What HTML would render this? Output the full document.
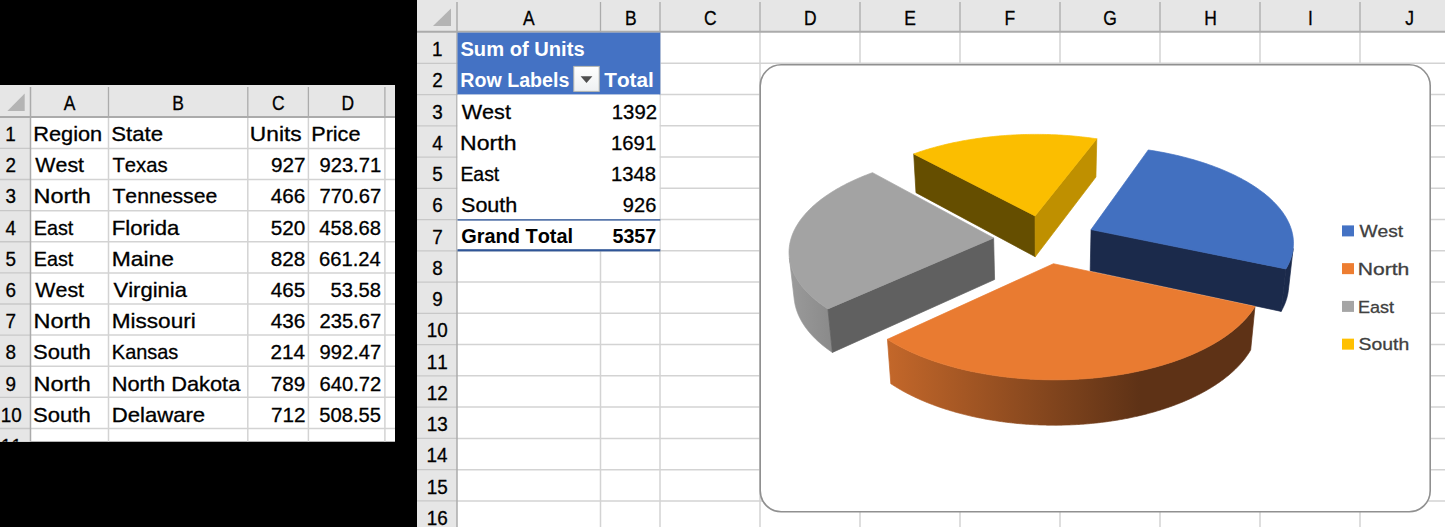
<!DOCTYPE html>
<html><head><meta charset="utf-8"><style>
html,body{margin:0;padding:0;background:#000;overflow:hidden}
svg{display:block}
text{font-family:"Liberation Sans",sans-serif;font-kerning:none}
</style></head><body>
<svg width="1445" height="527" viewBox="0 0 1445 527">
<rect x="0" y="0" width="1445" height="527" fill="#000"/>
<rect x="0" y="85" width="395" height="356.7" fill="#fff"/>
<rect x="0" y="85" width="395" height="32.28" fill="#E6E6E6"/>
<rect x="0" y="117.28" width="30.5" height="324.41999999999996" fill="#E6E6E6"/>
<clipPath id="cl"><rect x="0" y="85" width="395" height="356.7"/></clipPath><g clip-path="url(#cl)">
<line x1="30.5" y1="148.4" x2="395" y2="148.4" stroke="#D3D3D3" stroke-width="1.5"/>
<line x1="0" y1="148.4" x2="30.5" y2="148.4" stroke="#C8C8C8" stroke-width="1.3"/>
<line x1="30.5" y1="179.52" x2="395" y2="179.52" stroke="#D3D3D3" stroke-width="1.5"/>
<line x1="0" y1="179.52" x2="30.5" y2="179.52" stroke="#C8C8C8" stroke-width="1.3"/>
<line x1="30.5" y1="210.64" x2="395" y2="210.64" stroke="#D3D3D3" stroke-width="1.5"/>
<line x1="0" y1="210.64" x2="30.5" y2="210.64" stroke="#C8C8C8" stroke-width="1.3"/>
<line x1="30.5" y1="241.76" x2="395" y2="241.76" stroke="#D3D3D3" stroke-width="1.5"/>
<line x1="0" y1="241.76" x2="30.5" y2="241.76" stroke="#C8C8C8" stroke-width="1.3"/>
<line x1="30.5" y1="272.88" x2="395" y2="272.88" stroke="#D3D3D3" stroke-width="1.5"/>
<line x1="0" y1="272.88" x2="30.5" y2="272.88" stroke="#C8C8C8" stroke-width="1.3"/>
<line x1="30.5" y1="304.0" x2="395" y2="304.0" stroke="#D3D3D3" stroke-width="1.5"/>
<line x1="0" y1="304.0" x2="30.5" y2="304.0" stroke="#C8C8C8" stroke-width="1.3"/>
<line x1="30.5" y1="335.12" x2="395" y2="335.12" stroke="#D3D3D3" stroke-width="1.5"/>
<line x1="0" y1="335.12" x2="30.5" y2="335.12" stroke="#C8C8C8" stroke-width="1.3"/>
<line x1="30.5" y1="366.24" x2="395" y2="366.24" stroke="#D3D3D3" stroke-width="1.5"/>
<line x1="0" y1="366.24" x2="30.5" y2="366.24" stroke="#C8C8C8" stroke-width="1.3"/>
<line x1="30.5" y1="397.36" x2="395" y2="397.36" stroke="#D3D3D3" stroke-width="1.5"/>
<line x1="0" y1="397.36" x2="30.5" y2="397.36" stroke="#C8C8C8" stroke-width="1.3"/>
<line x1="30.5" y1="428.48" x2="395" y2="428.48" stroke="#D3D3D3" stroke-width="1.5"/>
<line x1="0" y1="428.48" x2="30.5" y2="428.48" stroke="#C8C8C8" stroke-width="1.3"/>
<line x1="30.5" y1="459.6" x2="395" y2="459.6" stroke="#D3D3D3" stroke-width="1.5"/>
<line x1="0" y1="459.6" x2="30.5" y2="459.6" stroke="#C8C8C8" stroke-width="1.3"/>
<line x1="108.5" y1="117.28" x2="108.5" y2="441.7" stroke="#D3D3D3" stroke-width="1.5"/>
<line x1="108.5" y1="87" x2="108.5" y2="117.28" stroke="#ABABAB" stroke-width="1.3"/>
<line x1="247.8" y1="117.28" x2="247.8" y2="441.7" stroke="#D3D3D3" stroke-width="1.5"/>
<line x1="247.8" y1="87" x2="247.8" y2="117.28" stroke="#ABABAB" stroke-width="1.3"/>
<line x1="308.4" y1="117.28" x2="308.4" y2="441.7" stroke="#D3D3D3" stroke-width="1.5"/>
<line x1="308.4" y1="87" x2="308.4" y2="117.28" stroke="#ABABAB" stroke-width="1.3"/>
<line x1="384.9" y1="117.28" x2="384.9" y2="441.7" stroke="#D3D3D3" stroke-width="1.5"/>
<line x1="384.9" y1="87" x2="384.9" y2="117.28" stroke="#ABABAB" stroke-width="1.3"/>
<line x1="30.5" y1="87" x2="30.5" y2="441.7" stroke="#ABABAB" stroke-width="1.5"/>
<line x1="0" y1="116.9" x2="395" y2="116.9" stroke="#ABABAB" stroke-width="2"/>
<polygon points="7.4,111 24.7,111 24.7,93.6" fill="#B4B4B4"/>
<text x="63.68" y="110.10" textLength="11.64" lengthAdjust="spacingAndGlyphs" font-size="20.3" fill="#000" stroke="#000" stroke-width="0.3">A</text>
<text x="172.32" y="110.10" textLength="11.64" lengthAdjust="spacingAndGlyphs" font-size="20.3" fill="#000" stroke="#000" stroke-width="0.3">B</text>
<text x="271.99" y="110.10" textLength="12.61" lengthAdjust="spacingAndGlyphs" font-size="20.3" fill="#000" stroke="#000" stroke-width="0.3">C</text>
<text x="341.40" y="110.10" textLength="12.61" lengthAdjust="spacingAndGlyphs" font-size="20.3" fill="#000" stroke="#000" stroke-width="0.3">D</text>
<text x="5.19" y="140.90" textLength="10.50" lengthAdjust="spacingAndGlyphs" font-size="20.3" fill="#000" stroke="#000" stroke-width="0.3">1</text>
<text x="5.45" y="172.10" textLength="10.50" lengthAdjust="spacingAndGlyphs" font-size="20.3" fill="#000" stroke="#000" stroke-width="0.3">2</text>
<text x="5.51" y="203.30" textLength="10.50" lengthAdjust="spacingAndGlyphs" font-size="20.3" fill="#000" stroke="#000" stroke-width="0.3">3</text>
<text x="5.51" y="234.50" textLength="10.50" lengthAdjust="spacingAndGlyphs" font-size="20.3" fill="#000" stroke="#000" stroke-width="0.3">4</text>
<text x="5.47" y="265.70" textLength="10.50" lengthAdjust="spacingAndGlyphs" font-size="20.3" fill="#000" stroke="#000" stroke-width="0.3">5</text>
<text x="5.39" y="296.90" textLength="10.50" lengthAdjust="spacingAndGlyphs" font-size="20.3" fill="#000" stroke="#000" stroke-width="0.3">6</text>
<text x="5.44" y="328.10" textLength="10.50" lengthAdjust="spacingAndGlyphs" font-size="20.3" fill="#000" stroke="#000" stroke-width="0.3">7</text>
<text x="5.45" y="359.30" textLength="10.50" lengthAdjust="spacingAndGlyphs" font-size="20.3" fill="#000" stroke="#000" stroke-width="0.3">8</text>
<text x="5.45" y="390.50" textLength="10.50" lengthAdjust="spacingAndGlyphs" font-size="20.3" fill="#000" stroke="#000" stroke-width="0.3">9</text>
<text x="0.65" y="421.70" textLength="21.00" lengthAdjust="spacingAndGlyphs" font-size="20.3" fill="#000" stroke="#000" stroke-width="0.3">10</text>
<text x="0.74" y="452.90" textLength="21.00" lengthAdjust="spacingAndGlyphs" font-size="20.3" fill="#000" stroke="#000" stroke-width="0.3">11</text>
</g>
<text x="33.21" y="140.90" textLength="69.00" lengthAdjust="spacingAndGlyphs" font-size="20.3" fill="#000" stroke="#000" stroke-width="0.3">Region</text>
<text x="111.29" y="140.90" textLength="51.79" lengthAdjust="spacingAndGlyphs" font-size="20.3" fill="#000" stroke="#000" stroke-width="0.3">State</text>
<text x="35.31" y="172.10" textLength="48.75" lengthAdjust="spacingAndGlyphs" font-size="20.3" fill="#000" stroke="#000" stroke-width="0.3">West</text>
<text x="112.44" y="172.10" textLength="55.19" lengthAdjust="spacingAndGlyphs" font-size="20.3" fill="#000" stroke="#000" stroke-width="0.3">Texas</text>
<text x="33.48" y="203.30" textLength="57.35" lengthAdjust="spacingAndGlyphs" font-size="20.3" fill="#000" stroke="#000" stroke-width="0.3">North</text>
<text x="112.42" y="203.30" textLength="104.82" lengthAdjust="spacingAndGlyphs" font-size="20.3" fill="#000" stroke="#000" stroke-width="0.3">Tennessee</text>
<text x="33.78" y="234.50" textLength="39.57" lengthAdjust="spacingAndGlyphs" font-size="20.3" fill="#000" stroke="#000" stroke-width="0.3">East</text>
<text x="111.79" y="234.50" textLength="67.61" lengthAdjust="spacingAndGlyphs" font-size="20.3" fill="#000" stroke="#000" stroke-width="0.3">Florida</text>
<text x="33.78" y="265.70" textLength="39.57" lengthAdjust="spacingAndGlyphs" font-size="20.3" fill="#000" stroke="#000" stroke-width="0.3">East</text>
<text x="111.72" y="265.70" textLength="62.29" lengthAdjust="spacingAndGlyphs" font-size="20.3" fill="#000" stroke="#000" stroke-width="0.3">Maine</text>
<text x="35.31" y="296.90" textLength="48.75" lengthAdjust="spacingAndGlyphs" font-size="20.3" fill="#000" stroke="#000" stroke-width="0.3">West</text>
<text x="113.50" y="296.90" textLength="73.40" lengthAdjust="spacingAndGlyphs" font-size="20.3" fill="#000" stroke="#000" stroke-width="0.3">Virginia</text>
<text x="33.48" y="328.10" textLength="57.35" lengthAdjust="spacingAndGlyphs" font-size="20.3" fill="#000" stroke="#000" stroke-width="0.3">North</text>
<text x="111.65" y="328.10" textLength="84.18" lengthAdjust="spacingAndGlyphs" font-size="20.3" fill="#000" stroke="#000" stroke-width="0.3">Missouri</text>
<text x="33.10" y="359.30" textLength="57.63" lengthAdjust="spacingAndGlyphs" font-size="20.3" fill="#000" stroke="#000" stroke-width="0.3">South</text>
<text x="111.87" y="359.30" textLength="66.45" lengthAdjust="spacingAndGlyphs" font-size="20.3" fill="#000" stroke="#000" stroke-width="0.3">Kansas</text>
<text x="33.48" y="390.50" textLength="57.35" lengthAdjust="spacingAndGlyphs" font-size="20.3" fill="#000" stroke="#000" stroke-width="0.3">North</text>
<text x="111.71" y="390.50" textLength="128.59" lengthAdjust="spacingAndGlyphs" font-size="20.3" fill="#000" stroke="#000" stroke-width="0.3">North Dakota</text>
<text x="33.10" y="421.70" textLength="57.63" lengthAdjust="spacingAndGlyphs" font-size="20.3" fill="#000" stroke="#000" stroke-width="0.3">South</text>
<text x="111.68" y="421.70" textLength="93.50" lengthAdjust="spacingAndGlyphs" font-size="20.3" fill="#000" stroke="#000" stroke-width="0.3">Delaware</text>
<text x="249.85" y="141.00" textLength="51.77" lengthAdjust="spacingAndGlyphs" font-size="20.3" fill="#000" stroke="#000" stroke-width="0.3">Units</text>
<text x="311.23" y="141.00" textLength="49.23" lengthAdjust="spacingAndGlyphs" font-size="20.3" fill="#000" stroke="#000" stroke-width="0.3">Price</text>
<text x="270.93" y="172.10" textLength="34.51" lengthAdjust="spacingAndGlyphs" font-size="20.3" fill="#000" stroke="#000" stroke-width="0.3">927</text>
<text x="319.45" y="172.10" textLength="61.73" lengthAdjust="spacingAndGlyphs" font-size="20.3" fill="#000" stroke="#000" stroke-width="0.3">923.71</text>
<text x="270.80" y="203.30" textLength="34.51" lengthAdjust="spacingAndGlyphs" font-size="20.3" fill="#000" stroke="#000" stroke-width="0.3">466</text>
<text x="319.48" y="203.30" textLength="61.73" lengthAdjust="spacingAndGlyphs" font-size="20.3" fill="#000" stroke="#000" stroke-width="0.3">770.67</text>
<text x="270.70" y="234.50" textLength="34.51" lengthAdjust="spacingAndGlyphs" font-size="20.3" fill="#000" stroke="#000" stroke-width="0.3">520</text>
<text x="319.35" y="234.50" textLength="61.73" lengthAdjust="spacingAndGlyphs" font-size="20.3" fill="#000" stroke="#000" stroke-width="0.3">458.68</text>
<text x="270.79" y="265.70" textLength="34.51" lengthAdjust="spacingAndGlyphs" font-size="20.3" fill="#000" stroke="#000" stroke-width="0.3">828</text>
<text x="319.06" y="265.70" textLength="61.73" lengthAdjust="spacingAndGlyphs" font-size="20.3" fill="#000" stroke="#000" stroke-width="0.3">661.24</text>
<text x="270.76" y="296.90" textLength="34.51" lengthAdjust="spacingAndGlyphs" font-size="20.3" fill="#000" stroke="#000" stroke-width="0.3">465</text>
<text x="330.57" y="296.90" textLength="50.51" lengthAdjust="spacingAndGlyphs" font-size="20.3" fill="#000" stroke="#000" stroke-width="0.3">53.58</text>
<text x="270.80" y="328.10" textLength="34.51" lengthAdjust="spacingAndGlyphs" font-size="20.3" fill="#000" stroke="#000" stroke-width="0.3">436</text>
<text x="319.48" y="328.10" textLength="61.73" lengthAdjust="spacingAndGlyphs" font-size="20.3" fill="#000" stroke="#000" stroke-width="0.3">235.67</text>
<text x="270.50" y="359.30" textLength="34.51" lengthAdjust="spacingAndGlyphs" font-size="20.3" fill="#000" stroke="#000" stroke-width="0.3">214</text>
<text x="319.48" y="359.30" textLength="61.73" lengthAdjust="spacingAndGlyphs" font-size="20.3" fill="#000" stroke="#000" stroke-width="0.3">992.47</text>
<text x="270.87" y="390.50" textLength="34.51" lengthAdjust="spacingAndGlyphs" font-size="20.3" fill="#000" stroke="#000" stroke-width="0.3">789</text>
<text x="319.48" y="390.50" textLength="61.73" lengthAdjust="spacingAndGlyphs" font-size="20.3" fill="#000" stroke="#000" stroke-width="0.3">640.72</text>
<text x="270.93" y="421.70" textLength="34.51" lengthAdjust="spacingAndGlyphs" font-size="20.3" fill="#000" stroke="#000" stroke-width="0.3">712</text>
<text x="319.32" y="421.70" textLength="61.73" lengthAdjust="spacingAndGlyphs" font-size="20.3" fill="#000" stroke="#000" stroke-width="0.3">508.55</text>
<rect x="417.0" y="0" width="1028.0" height="527" fill="#fff"/>
<rect x="417.0" y="0" width="1028.0" height="32.04" fill="#E6E6E6"/>
<rect x="417.0" y="32.04" width="40.0" height="494.96" fill="#E6E6E6"/>
<line x1="457" y1="63.297" x2="1445" y2="63.297" stroke="#D3D3D3" stroke-width="1.5"/>
<line x1="417.0" y1="63.297" x2="457" y2="63.297" stroke="#C8C8C8" stroke-width="1.3"/>
<line x1="457" y1="94.554" x2="1445" y2="94.554" stroke="#D3D3D3" stroke-width="1.5"/>
<line x1="417.0" y1="94.554" x2="457" y2="94.554" stroke="#C8C8C8" stroke-width="1.3"/>
<line x1="457" y1="125.811" x2="1445" y2="125.811" stroke="#D3D3D3" stroke-width="1.5"/>
<line x1="417.0" y1="125.811" x2="457" y2="125.811" stroke="#C8C8C8" stroke-width="1.3"/>
<line x1="457" y1="157.068" x2="1445" y2="157.068" stroke="#D3D3D3" stroke-width="1.5"/>
<line x1="417.0" y1="157.068" x2="457" y2="157.068" stroke="#C8C8C8" stroke-width="1.3"/>
<line x1="457" y1="188.325" x2="1445" y2="188.325" stroke="#D3D3D3" stroke-width="1.5"/>
<line x1="417.0" y1="188.325" x2="457" y2="188.325" stroke="#C8C8C8" stroke-width="1.3"/>
<line x1="457" y1="219.582" x2="1445" y2="219.582" stroke="#D3D3D3" stroke-width="1.5"/>
<line x1="417.0" y1="219.582" x2="457" y2="219.582" stroke="#C8C8C8" stroke-width="1.3"/>
<line x1="457" y1="250.839" x2="1445" y2="250.839" stroke="#D3D3D3" stroke-width="1.5"/>
<line x1="417.0" y1="250.839" x2="457" y2="250.839" stroke="#C8C8C8" stroke-width="1.3"/>
<line x1="457" y1="282.096" x2="1445" y2="282.096" stroke="#D3D3D3" stroke-width="1.5"/>
<line x1="417.0" y1="282.096" x2="457" y2="282.096" stroke="#C8C8C8" stroke-width="1.3"/>
<line x1="457" y1="313.353" x2="1445" y2="313.353" stroke="#D3D3D3" stroke-width="1.5"/>
<line x1="417.0" y1="313.353" x2="457" y2="313.353" stroke="#C8C8C8" stroke-width="1.3"/>
<line x1="457" y1="344.61" x2="1445" y2="344.61" stroke="#D3D3D3" stroke-width="1.5"/>
<line x1="417.0" y1="344.61" x2="457" y2="344.61" stroke="#C8C8C8" stroke-width="1.3"/>
<line x1="457" y1="375.867" x2="1445" y2="375.867" stroke="#D3D3D3" stroke-width="1.5"/>
<line x1="417.0" y1="375.867" x2="457" y2="375.867" stroke="#C8C8C8" stroke-width="1.3"/>
<line x1="457" y1="407.124" x2="1445" y2="407.124" stroke="#D3D3D3" stroke-width="1.5"/>
<line x1="417.0" y1="407.124" x2="457" y2="407.124" stroke="#C8C8C8" stroke-width="1.3"/>
<line x1="457" y1="438.38100000000003" x2="1445" y2="438.38100000000003" stroke="#D3D3D3" stroke-width="1.5"/>
<line x1="417.0" y1="438.38100000000003" x2="457" y2="438.38100000000003" stroke="#C8C8C8" stroke-width="1.3"/>
<line x1="457" y1="469.63800000000003" x2="1445" y2="469.63800000000003" stroke="#D3D3D3" stroke-width="1.5"/>
<line x1="417.0" y1="469.63800000000003" x2="457" y2="469.63800000000003" stroke="#C8C8C8" stroke-width="1.3"/>
<line x1="457" y1="500.89500000000004" x2="1445" y2="500.89500000000004" stroke="#D3D3D3" stroke-width="1.5"/>
<line x1="417.0" y1="500.89500000000004" x2="457" y2="500.89500000000004" stroke="#C8C8C8" stroke-width="1.3"/>
<line x1="457" y1="532.152" x2="1445" y2="532.152" stroke="#D3D3D3" stroke-width="1.5"/>
<line x1="417.0" y1="532.152" x2="457" y2="532.152" stroke="#C8C8C8" stroke-width="1.3"/>
<line x1="600.5" y1="31.7" x2="600.5" y2="527" stroke="#D3D3D3" stroke-width="1.5"/>
<line x1="600.5" y1="2" x2="600.5" y2="31.7" stroke="#ABABAB" stroke-width="1.3"/>
<line x1="660" y1="31.7" x2="660" y2="527" stroke="#D3D3D3" stroke-width="1.5"/>
<line x1="660" y1="2" x2="660" y2="31.7" stroke="#ABABAB" stroke-width="1.3"/>
<line x1="760" y1="31.7" x2="760" y2="527" stroke="#D3D3D3" stroke-width="1.5"/>
<line x1="760" y1="2" x2="760" y2="31.7" stroke="#ABABAB" stroke-width="1.3"/>
<line x1="860" y1="31.7" x2="860" y2="527" stroke="#D3D3D3" stroke-width="1.5"/>
<line x1="860" y1="2" x2="860" y2="31.7" stroke="#ABABAB" stroke-width="1.3"/>
<line x1="960" y1="31.7" x2="960" y2="527" stroke="#D3D3D3" stroke-width="1.5"/>
<line x1="960" y1="2" x2="960" y2="31.7" stroke="#ABABAB" stroke-width="1.3"/>
<line x1="1060" y1="31.7" x2="1060" y2="527" stroke="#D3D3D3" stroke-width="1.5"/>
<line x1="1060" y1="2" x2="1060" y2="31.7" stroke="#ABABAB" stroke-width="1.3"/>
<line x1="1160" y1="31.7" x2="1160" y2="527" stroke="#D3D3D3" stroke-width="1.5"/>
<line x1="1160" y1="2" x2="1160" y2="31.7" stroke="#ABABAB" stroke-width="1.3"/>
<line x1="1260" y1="31.7" x2="1260" y2="527" stroke="#D3D3D3" stroke-width="1.5"/>
<line x1="1260" y1="2" x2="1260" y2="31.7" stroke="#ABABAB" stroke-width="1.3"/>
<line x1="1360" y1="31.7" x2="1360" y2="527" stroke="#D3D3D3" stroke-width="1.5"/>
<line x1="1360" y1="2" x2="1360" y2="31.7" stroke="#ABABAB" stroke-width="1.3"/>
<line x1="457" y1="2" x2="457" y2="527" stroke="#ABABAB" stroke-width="1.5"/>
<line x1="417.0" y1="31.7" x2="1445" y2="31.7" stroke="#ABABAB" stroke-width="2"/>
<polygon points="433,26 451,26 451,8.5" fill="#B4B4B4"/>
<text x="522.88" y="24.70" textLength="11.64" lengthAdjust="spacingAndGlyphs" font-size="20.3" fill="#000" stroke="#000" stroke-width="0.3">A</text>
<text x="624.92" y="24.70" textLength="11.64" lengthAdjust="spacingAndGlyphs" font-size="20.3" fill="#000" stroke="#000" stroke-width="0.3">B</text>
<text x="704.09" y="24.70" textLength="12.61" lengthAdjust="spacingAndGlyphs" font-size="20.3" fill="#000" stroke="#000" stroke-width="0.3">C</text>
<text x="803.90" y="24.70" textLength="12.61" lengthAdjust="spacingAndGlyphs" font-size="20.3" fill="#000" stroke="#000" stroke-width="0.3">D</text>
<text x="904.34" y="24.70" textLength="11.64" lengthAdjust="spacingAndGlyphs" font-size="20.3" fill="#000" stroke="#000" stroke-width="0.3">E</text>
<text x="1004.50" y="24.70" textLength="10.66" lengthAdjust="spacingAndGlyphs" font-size="20.3" fill="#000" stroke="#000" stroke-width="0.3">F</text>
<text x="1103.22" y="24.70" textLength="13.58" lengthAdjust="spacingAndGlyphs" font-size="20.3" fill="#000" stroke="#000" stroke-width="0.3">G</text>
<text x="1204.19" y="24.70" textLength="12.61" lengthAdjust="spacingAndGlyphs" font-size="20.3" fill="#000" stroke="#000" stroke-width="0.3">H</text>
<text x="1308.07" y="24.70" textLength="4.85" lengthAdjust="spacingAndGlyphs" font-size="20.3" fill="#000" stroke="#000" stroke-width="0.3">I</text>
<text x="1405.35" y="24.70" textLength="8.73" lengthAdjust="spacingAndGlyphs" font-size="20.3" fill="#000" stroke="#000" stroke-width="0.3">J</text>
<text x="431.99" y="56.05" textLength="10.50" lengthAdjust="spacingAndGlyphs" font-size="20.3" fill="#000" stroke="#000" stroke-width="0.3">1</text>
<text x="432.25" y="87.30" textLength="10.50" lengthAdjust="spacingAndGlyphs" font-size="20.3" fill="#000" stroke="#000" stroke-width="0.3">2</text>
<text x="432.31" y="118.56" textLength="10.50" lengthAdjust="spacingAndGlyphs" font-size="20.3" fill="#000" stroke="#000" stroke-width="0.3">3</text>
<text x="432.31" y="149.82" textLength="10.50" lengthAdjust="spacingAndGlyphs" font-size="20.3" fill="#000" stroke="#000" stroke-width="0.3">4</text>
<text x="432.27" y="181.07" textLength="10.50" lengthAdjust="spacingAndGlyphs" font-size="20.3" fill="#000" stroke="#000" stroke-width="0.3">5</text>
<text x="432.19" y="212.33" textLength="10.50" lengthAdjust="spacingAndGlyphs" font-size="20.3" fill="#000" stroke="#000" stroke-width="0.3">6</text>
<text x="432.24" y="243.59" textLength="10.50" lengthAdjust="spacingAndGlyphs" font-size="20.3" fill="#000" stroke="#000" stroke-width="0.3">7</text>
<text x="432.25" y="274.85" textLength="10.50" lengthAdjust="spacingAndGlyphs" font-size="20.3" fill="#000" stroke="#000" stroke-width="0.3">8</text>
<text x="432.25" y="306.10" textLength="10.50" lengthAdjust="spacingAndGlyphs" font-size="20.3" fill="#000" stroke="#000" stroke-width="0.3">9</text>
<text x="426.65" y="337.36" textLength="21.00" lengthAdjust="spacingAndGlyphs" font-size="20.3" fill="#000" stroke="#000" stroke-width="0.3">10</text>
<text x="426.74" y="368.62" textLength="21.00" lengthAdjust="spacingAndGlyphs" font-size="20.3" fill="#000" stroke="#000" stroke-width="0.3">11</text>
<text x="426.76" y="399.87" textLength="21.00" lengthAdjust="spacingAndGlyphs" font-size="20.3" fill="#000" stroke="#000" stroke-width="0.3">12</text>
<text x="426.70" y="431.13" textLength="21.00" lengthAdjust="spacingAndGlyphs" font-size="20.3" fill="#000" stroke="#000" stroke-width="0.3">13</text>
<text x="426.56" y="462.39" textLength="21.00" lengthAdjust="spacingAndGlyphs" font-size="20.3" fill="#000" stroke="#000" stroke-width="0.3">14</text>
<text x="426.68" y="493.65" textLength="21.00" lengthAdjust="spacingAndGlyphs" font-size="20.3" fill="#000" stroke="#000" stroke-width="0.3">15</text>
<text x="426.70" y="524.90" textLength="21.00" lengthAdjust="spacingAndGlyphs" font-size="20.3" fill="#000" stroke="#000" stroke-width="0.3">16</text>
<rect x="457.5" y="32.6" width="202.79999999999995" height="61.99999999999999" fill="#4472C4"/>
<rect x="457.5" y="94.6" width="202.0" height="155.9" fill="#fff"/>
<text x="460.42" y="55.90" textLength="124.21" lengthAdjust="spacingAndGlyphs" font-size="20.3" font-weight="bold" fill="#fff">Sum of Units</text>
<text x="460.29" y="87.40" textLength="109.12" lengthAdjust="spacingAndGlyphs" font-size="20.3" font-weight="bold" fill="#fff">Row Labels</text>
<text x="604.27" y="87.30" textLength="49.50" lengthAdjust="spacingAndGlyphs" font-size="20.3" font-weight="bold" fill="#fff">Total</text>
<linearGradient id="dd" x1="0" y1="0" x2="0" y2="1"><stop offset="0" stop-color="#ffffff"/><stop offset="1" stop-color="#EEF0F2"/></linearGradient>
<rect x="573.8" y="66.4" width="25.4" height="25" fill="url(#dd)" stroke="#B8B8B0" stroke-width="1"/>
<polygon points="580.6,76.3 592.4,76.3 586.5,82.9" fill="#4F4F4F"/>
<text x="461.70" y="118.56" textLength="49.25" lengthAdjust="spacingAndGlyphs" font-size="20.3" fill="#000" stroke="#000" stroke-width="0.3">West</text>
<text x="611.75" y="118.56" textLength="45.27" lengthAdjust="spacingAndGlyphs" font-size="20.3" fill="#000" stroke="#000" stroke-width="0.3">1392</text>
<text x="460.11" y="149.82" textLength="56.39" lengthAdjust="spacingAndGlyphs" font-size="20.3" fill="#000" stroke="#000" stroke-width="0.3">North</text>
<text x="611.05" y="149.82" textLength="45.14" lengthAdjust="spacingAndGlyphs" font-size="20.3" fill="#000" stroke="#000" stroke-width="0.3">1691</text>
<text x="460.41" y="181.07" textLength="38.83" lengthAdjust="spacingAndGlyphs" font-size="20.3" fill="#000" stroke="#000" stroke-width="0.3">East</text>
<text x="611.06" y="181.07" textLength="45.02" lengthAdjust="spacingAndGlyphs" font-size="20.3" fill="#000" stroke="#000" stroke-width="0.3">1348</text>
<text x="461.02" y="212.33" textLength="56.28" lengthAdjust="spacingAndGlyphs" font-size="20.3" fill="#000" stroke="#000" stroke-width="0.3">South</text>
<text x="622.86" y="212.33" textLength="33.42" lengthAdjust="spacingAndGlyphs" font-size="20.3" fill="#000" stroke="#000" stroke-width="0.3">926</text>
<text x="461.18" y="243.10" textLength="111.93" lengthAdjust="spacingAndGlyphs" font-size="20.3" font-weight="bold" fill="#000">Grand Total</text>
<text x="612.49" y="243.10" textLength="43.77" lengthAdjust="spacingAndGlyphs" font-size="20.3" font-weight="bold" fill="#000">5357</text>
<rect x="457.5" y="219.2" width="202.79999999999995" height="1.4" fill="#2F5597"/>
<rect x="457.5" y="249.2" width="202.79999999999995" height="2.2" fill="#2F5597"/>
<rect x="760.2" y="64.8" width="670" height="447" rx="21" ry="21" fill="#fff" stroke="#909090" stroke-width="1.6"/>
<linearGradient id="og" gradientUnits="userSpaceOnUse" x1="888" y1="0" x2="1140" y2="0"><stop offset="0" stop-color="#C3672A"/><stop offset="1" stop-color="#5E3216"/></linearGradient>
<linearGradient id="gg" gradientUnits="userSpaceOnUse" x1="790" y1="0" x2="832" y2="0"><stop offset="0" stop-color="#9A9A9A"/><stop offset="1" stop-color="#8A8A8A"/></linearGradient>
<polygon points="1035.05,215.92 913.73,153.90 915.97,192.63 1035.23,256.72" fill="#654E00" stroke="#654E00" stroke-width="0.7" stroke-linejoin="round"/>
<polygon points="1035.05,215.92 1096.79,138.81 1095.91,177.02 1035.23,256.72" fill="#BF9000" stroke="#BF9000" stroke-width="0.7" stroke-linejoin="round"/>
<polygon points="1035.05,215.92 913.73,153.90 915.72,153.19 917.72,152.49 919.74,151.81 921.77,151.14 923.82,150.48 925.89,149.84 927.97,149.20 930.06,148.58 932.17,147.97 934.30,147.38 936.44,146.80 938.59,146.23 940.76,145.67 942.93,145.13 945.13,144.60 947.33,144.08 949.54,143.57 951.77,143.08 954.01,142.60 956.26,142.14 958.52,141.69 960.79,141.25 963.07,140.82 965.36,140.41 967.66,140.01 969.97,139.63 972.29,139.26 974.61,138.90 976.95,138.55 979.29,138.22 981.64,137.90 983.99,137.60 986.35,137.31 988.72,137.03 991.10,136.77 993.48,136.52 995.86,136.28 998.26,136.06 1000.65,135.85 1003.05,135.66 1005.46,135.48 1007.87,135.31 1010.28,135.15 1012.69,135.01 1015.11,134.89 1017.53,134.78 1019.96,134.68 1022.38,134.59 1024.81,134.52 1027.24,134.47 1029.67,134.42 1032.10,134.39 1034.53,134.38 1036.96,134.38 1039.39,134.39 1041.81,134.41 1044.24,134.45 1046.67,134.51 1049.10,134.58 1051.52,134.66 1053.94,134.75 1056.36,134.86 1058.78,134.98 1061.19,135.12 1063.60,135.27 1066.00,135.43 1068.41,135.61 1070.80,135.80 1073.19,136.01 1075.58,136.23 1077.96,136.46 1080.34,136.71 1082.71,136.97 1085.07,137.24 1087.43,137.53 1089.78,137.83 1092.12,138.14 1094.46,138.47 1096.79,138.81" fill="#FBBE00" stroke="#FBBE00" stroke-width="0.7" stroke-linejoin="round"/>
<polygon points="1293.13,248.53 1293.08,248.92 1293.03,249.32 1292.98,249.71 1292.92,250.11 1292.85,250.50 1292.79,250.90 1292.72,251.29 1292.65,251.69 1292.57,252.08 1292.49,252.48 1292.41,252.87 1292.32,253.27 1292.23,253.66 1292.13,254.06 1292.03,254.45 1291.93,254.85 1291.83,255.24 1291.72,255.64 1291.61,256.03 1291.49,256.43 1291.37,256.82 1291.25,257.21 1291.12,257.61 1290.99,258.00 1290.86,258.40 1290.72,258.79 1290.58,259.19 1290.44,259.58 1290.29,259.97 1290.14,260.37 1289.98,260.76 1289.82,261.15 1289.66,261.54 1289.49,261.94 1289.32,262.33 1289.15,262.72 1288.97,263.11 1288.79,263.51 1288.61,263.90 1288.42,264.29 1288.23,264.68 1288.04,265.07 1287.84,265.46 1287.63,265.85 1287.43,266.24 1287.22,266.63 1287.01,267.02 1286.79,267.41 1286.57,267.80 1286.34,268.19 1286.12,268.57 1285.89,268.96 1281.13,311.38 1281.36,310.98 1281.59,310.58 1281.81,310.18 1282.03,309.78 1282.24,309.38 1282.45,308.98 1282.66,308.58 1282.87,308.18 1283.07,307.78 1283.26,307.37 1283.46,306.97 1283.65,306.57 1283.83,306.17 1284.02,305.76 1284.19,305.36 1284.37,304.96 1284.54,304.55 1284.71,304.15 1284.88,303.75 1285.04,303.34 1285.20,302.94 1285.35,302.53 1285.50,302.13 1285.65,301.72 1285.79,301.32 1285.93,300.91 1286.07,300.50 1286.20,300.10 1286.33,299.69 1286.46,299.29 1286.58,298.88 1286.70,298.47 1286.82,298.07 1286.93,297.66 1287.04,297.26 1287.14,296.85 1287.24,296.44 1287.34,296.04 1287.44,295.63 1287.53,295.22 1287.62,294.81 1287.70,294.41 1287.78,294.00 1287.86,293.59 1287.93,293.19 1288.00,292.78 1288.07,292.37 1288.13,291.97 1288.19,291.56 1288.25,291.15 1288.30,290.74 1288.35,290.34" fill="#1B2A4B" stroke="#1B2A4B" stroke-width="0.7" stroke-linejoin="round"/>
<polygon points="1091.07,229.60 1285.89,268.96 1281.13,311.38 1090.20,270.83" fill="#1B2A4B" stroke="#1B2A4B" stroke-width="0.7" stroke-linejoin="round"/>
<polygon points="1091.07,229.60 1148.26,149.95 1151.83,150.51 1155.39,151.10 1158.93,151.72 1162.45,152.37 1165.95,153.05 1169.42,153.76 1172.87,154.50 1176.30,155.27 1179.70,156.08 1183.08,156.91 1186.42,157.77 1189.74,158.67 1193.03,159.59 1196.28,160.55 1199.51,161.53 1202.70,162.54 1205.85,163.58 1208.97,164.65 1212.05,165.75 1215.09,166.88 1218.09,168.04 1221.06,169.22 1223.97,170.43 1226.85,171.67 1229.68,172.94 1232.47,174.23 1235.21,175.55 1237.90,176.90 1240.55,178.27 1243.14,179.66 1245.68,181.09 1248.17,182.53 1250.60,184.01 1252.98,185.50 1255.31,187.02 1257.58,188.57 1259.78,190.13 1261.93,191.72 1264.02,193.33 1266.05,194.96 1268.01,196.62 1269.91,198.29 1271.74,199.98 1273.51,201.70 1275.21,203.43 1276.84,205.18 1278.40,206.95 1279.89,208.74 1281.31,210.54 1282.65,212.36 1283.92,214.20 1285.12,216.05 1286.24,217.91 1287.28,219.79 1288.24,221.68 1289.13,223.59 1289.93,225.50 1290.66,227.43 1291.30,229.36 1291.86,231.31 1292.34,233.27 1292.73,235.23 1293.04,237.20 1293.26,239.17 1293.40,241.15 1293.44,243.14 1293.40,245.13 1293.28,247.12 1293.06,249.12 1292.75,251.11 1292.35,253.11 1291.87,255.10 1291.29,257.10 1290.62,259.09 1289.86,261.07 1289.00,263.05 1288.06,265.03 1287.02,267.00 1285.89,268.96" fill="#4270C0" stroke="#4270C0" stroke-width="0.7" stroke-linejoin="round"/>
<polygon points="827.91,308.90 827.40,308.57 826.89,308.24 826.39,307.91 825.89,307.57 825.39,307.24 824.90,306.91 824.40,306.57 823.92,306.23 823.43,305.90 822.95,305.56 822.47,305.22 822.00,304.88 821.53,304.54 821.06,304.20 820.59,303.85 820.13,303.51 819.67,303.17 819.22,302.82 818.77,302.48 818.32,302.13 817.87,301.78 817.43,301.43 816.99,301.09 816.56,300.74 816.13,300.38 815.70,300.03 815.27,299.68 814.85,299.33 814.43,298.97 814.02,298.62 813.61,298.26 813.20,297.91 812.79,297.55 812.39,297.19 811.99,296.84 811.60,296.48 811.21,296.12 810.82,295.76 810.43,295.40 810.05,295.04 809.67,294.67 809.30,294.31 808.93,293.95 808.56,293.58 808.20,293.22 807.84,292.85 807.48,292.49 807.12,292.12 806.77,291.75 806.43,291.39 806.08,291.02 805.74,290.65 805.41,290.28 805.07,289.91 804.74,289.54 804.42,289.17 804.09,288.80 803.77,288.43 803.46,288.05 803.14,287.68 802.83,287.31 802.53,286.93 802.23,286.56 801.93,286.18 801.63,285.81 801.34,285.43 801.05,285.05 800.76,284.68 800.48,284.30 800.20,283.92 799.93,283.54 799.66,283.16 799.39,282.79 799.12,282.41 798.86,282.03 798.61,281.65 798.35,281.26 798.10,280.88 797.85,280.50 797.61,280.12 797.37,279.74 797.13,279.36 796.90,278.97 796.67,278.59 796.44,278.21 796.22,277.82 796.00,277.44 795.78,277.05 795.57,276.67 795.36,276.28 795.15,275.90 794.95,275.51 794.75,275.13 794.56,274.74 794.36,274.35 794.18,273.97 793.99,273.58 793.81,273.19 793.63,272.81 793.46,272.42 793.28,272.03 793.12,271.64 792.95,271.25 792.79,270.87 792.63,270.48 792.48,270.09 792.33,269.70 792.18,269.31 792.03,268.92 791.89,268.53 791.76,268.14 791.62,267.75 791.49,267.36 791.36,266.97 791.24,266.58 791.12,266.19 791.00,265.80 790.89,265.41 790.78,265.02 790.67,264.63 790.57,264.24 790.47,263.85 790.37,263.46 790.28,263.07 790.19,262.68 790.10,262.29 790.02,261.90 789.94,261.51 789.86,261.12 789.79,260.73 789.72,260.33 789.66,259.94 789.59,259.55 789.53,259.16 789.48,258.77 789.42,258.38 789.37,257.99 794.34,300.08 794.39,300.49 794.44,300.89 794.50,301.29 794.56,301.69 794.62,302.10 794.69,302.50 794.76,302.90 794.84,303.30 794.91,303.71 794.99,304.11 795.08,304.51 795.16,304.91 795.26,305.32 795.35,305.72 795.45,306.12 795.55,306.52 795.65,306.92 795.76,307.33 795.87,307.73 795.98,308.13 796.10,308.53 796.22,308.93 796.34,309.33 796.47,309.74 796.60,310.14 796.73,310.54 796.87,310.94 797.01,311.34 797.15,311.74 797.30,312.14 797.45,312.54 797.60,312.94 797.76,313.34 797.92,313.74 798.08,314.14 798.25,314.54 798.42,314.94 798.60,315.34 798.77,315.74 798.95,316.13 799.14,316.53 799.32,316.93 799.52,317.33 799.71,317.73 799.91,318.12 800.11,318.52 800.31,318.92 800.52,319.31 800.73,319.71 800.94,320.10 801.16,320.50 801.38,320.89 801.61,321.29 801.83,321.68 802.07,322.08 802.30,322.47 802.54,322.86 802.78,323.26 803.02,323.65 803.27,324.04 803.52,324.43 803.78,324.82 804.04,325.21 804.30,325.60 804.56,325.99 804.83,326.38 805.10,326.77 805.38,327.16 805.65,327.55 805.94,327.94 806.22,328.32 806.51,328.71 806.80,329.10 807.10,329.48 807.40,329.87 807.70,330.25 808.00,330.64 808.31,331.02 808.62,331.40 808.94,331.79 809.26,332.17 809.58,332.55 809.90,332.93 810.23,333.31 810.57,333.69 810.90,334.07 811.24,334.45 811.58,334.83 811.93,335.21 812.28,335.58 812.63,335.96 812.98,336.33 813.34,336.71 813.70,337.08 814.07,337.46 814.44,337.83 814.81,338.20 815.19,338.57 815.57,338.94 815.95,339.31 816.33,339.68 816.72,340.05 817.11,340.42 817.51,340.79 817.91,341.15 818.31,341.52 818.71,341.89 819.12,342.25 819.53,342.61 819.95,342.98 820.37,343.34 820.79,343.70 821.21,344.06 821.64,344.42 822.07,344.78 822.51,345.14 822.95,345.49 823.39,345.85 823.83,346.20 824.28,346.56 824.73,346.91 825.18,347.27 825.64,347.62 826.10,347.97 826.56,348.32 827.03,348.67 827.50,349.02 827.97,349.36 828.45,349.71 828.93,350.06 829.41,350.40 829.90,350.74 830.39,351.09 830.88,351.43 831.38,351.77 831.87,352.11 832.38,352.45" fill="url(#gg)" stroke="url(#gg)" stroke-width="0.7" stroke-linejoin="round"/>
<polygon points="993.62,238.02 827.91,308.90 832.38,352.45 994.59,279.51" fill="#606060" stroke="#606060" stroke-width="0.7" stroke-linejoin="round"/>
<polygon points="993.62,238.02 827.91,308.90 825.37,307.22 822.90,305.52 820.52,303.80 818.23,302.06 816.02,300.30 813.89,298.51 811.85,296.71 809.90,294.89 808.03,293.05 806.25,291.20 804.56,289.33 802.95,287.45 801.44,285.56 800.01,283.65 798.67,281.74 797.41,279.81 796.25,277.88 795.17,275.93 794.18,273.98 793.28,272.03 792.47,270.06 791.74,268.10 791.10,266.13 790.55,264.16 790.08,262.18 789.70,260.21 789.40,258.24 789.19,256.26 789.07,254.29 789.03,252.33 789.07,250.36 789.19,248.40 789.40,246.44 789.69,244.49 790.05,242.55 790.50,240.62 791.03,238.69 791.64,236.77 792.32,234.86 793.08,232.96 793.92,231.07 794.83,229.19 795.82,227.33 796.88,225.48 798.01,223.64 799.22,221.81 800.49,220.00 801.84,218.21 803.25,216.43 804.73,214.67 806.28,212.92 807.90,211.19 809.57,209.48 811.32,207.79 813.12,206.11 814.99,204.46 816.92,202.82 818.91,201.21 820.95,199.62 823.06,198.04 825.22,196.49 827.43,194.96 829.70,193.46 832.02,191.97 834.40,190.51 836.82,189.07 839.30,187.66 841.83,186.27 844.40,184.90 847.02,183.56 849.68,182.25 852.39,180.96 855.14,179.69 857.94,178.45 860.78,177.24 863.65,176.05 866.57,174.89 869.52,173.76 872.51,172.65" fill="#A3A3A3" stroke="#A3A3A3" stroke-width="0.7" stroke-linejoin="round"/>
<polygon points="1254.98,306.55 1254.66,307.06 1254.34,307.58 1254.01,308.09 1253.68,308.60 1253.34,309.11 1253.00,309.62 1252.65,310.13 1252.29,310.64 1251.93,311.15 1251.56,311.66 1251.19,312.16 1250.81,312.67 1250.43,313.18 1250.04,313.68 1249.65,314.19 1249.25,314.69 1248.84,315.19 1248.43,315.69 1248.01,316.20 1247.59,316.70 1247.16,317.20 1246.73,317.70 1246.29,318.19 1245.84,318.69 1245.39,319.19 1244.94,319.68 1244.47,320.18 1244.01,320.67 1243.54,321.16 1243.06,321.65 1242.57,322.14 1242.08,322.63 1241.59,323.12 1241.09,323.61 1240.58,324.10 1240.07,324.58 1239.56,325.06 1239.03,325.55 1238.51,326.03 1237.97,326.51 1237.43,326.99 1236.89,327.47 1236.34,327.95 1235.78,328.42 1235.22,328.90 1234.66,329.37 1234.09,329.84 1233.51,330.31 1232.93,330.78 1232.34,331.25 1231.75,331.72 1231.15,332.18 1230.55,332.65 1229.94,333.11 1229.32,333.57 1228.70,334.03 1228.08,334.49 1227.45,334.95 1226.81,335.41 1226.17,335.86 1225.53,336.31 1224.87,336.76 1224.22,337.21 1223.56,337.66 1222.89,338.11 1222.22,338.56 1221.54,339.00 1220.86,339.44 1220.17,339.88 1219.48,340.32 1218.78,340.76 1218.07,341.19 1217.37,341.63 1216.65,342.06 1215.93,342.49 1215.21,342.92 1214.48,343.35 1213.75,343.77 1213.01,344.19 1212.27,344.62 1211.52,345.04 1210.76,345.45 1210.01,345.87 1209.24,346.28 1208.47,346.70 1207.70,347.11 1206.92,347.52 1206.14,347.92 1205.35,348.33 1204.56,348.73 1203.76,349.13 1202.96,349.53 1202.15,349.93 1201.34,350.32 1200.52,350.72 1199.70,351.11 1198.88,351.50 1198.05,351.88 1197.21,352.27 1196.37,352.65 1195.53,353.03 1194.68,353.41 1193.83,353.78 1192.97,354.16 1192.11,354.53 1191.24,354.90 1190.37,355.27 1189.49,355.63 1188.61,356.00 1187.73,356.36 1186.84,356.71 1185.95,357.07 1185.05,357.43 1184.15,357.78 1183.24,358.13 1182.33,358.47 1181.41,358.82 1180.50,359.16 1179.57,359.50 1178.65,359.84 1177.71,360.17 1176.78,360.50 1175.84,360.83 1174.90,361.16 1173.95,361.49 1173.00,361.81 1172.04,362.13 1171.08,362.45 1170.12,362.76 1169.15,363.08 1168.18,363.39 1167.21,363.69 1166.23,364.00 1165.25,364.30 1164.26,364.60 1163.27,364.90 1162.28,365.19 1161.28,365.49 1160.28,365.78 1159.28,366.06 1158.27,366.35 1157.26,366.63 1156.25,366.91 1155.23,367.18 1154.21,367.46 1153.18,367.73 1152.15,368.00 1151.12,368.26 1150.09,368.52 1149.05,368.78 1148.01,369.04 1146.96,369.29 1145.92,369.55 1144.87,369.79 1143.81,370.04 1142.75,370.28 1141.69,370.52 1140.63,370.76 1139.57,370.99 1138.50,371.23 1137.43,371.45 1136.35,371.68 1135.27,371.90 1134.19,372.12 1133.11,372.34 1132.03,372.55 1130.94,372.76 1129.85,372.97 1128.75,373.18 1127.66,373.38 1126.56,373.58 1125.46,373.77 1124.35,373.97 1123.25,374.16 1122.14,374.35 1121.03,374.53 1119.92,374.71 1118.80,374.89 1117.68,375.06 1116.56,375.24 1115.44,375.40 1114.32,375.57 1113.19,375.73 1112.06,375.89 1110.93,376.05 1109.80,376.20 1108.67,376.35 1107.53,376.50 1106.40,376.64 1105.26,376.79 1104.11,376.92 1102.97,377.06 1101.83,377.19 1100.68,377.32 1099.53,377.44 1098.38,377.57 1097.23,377.69 1096.08,377.80 1094.92,377.91 1093.77,378.02 1092.61,378.13 1091.45,378.23 1090.29,378.33 1089.13,378.43 1087.97,378.52 1086.81,378.61 1085.64,378.70 1084.48,378.79 1083.31,378.87 1082.14,378.94 1080.97,379.02 1079.80,379.09 1078.63,379.16 1077.46,379.22 1076.29,379.28 1075.12,379.34 1073.94,379.40 1072.77,379.45 1071.59,379.50 1070.42,379.54 1069.24,379.58 1068.06,379.62 1066.88,379.66 1065.71,379.69 1064.53,379.72 1063.35,379.74 1062.17,379.77 1060.99,379.79 1059.81,379.80 1058.63,379.81 1057.45,379.82 1056.27,379.83 1055.09,379.83 1053.91,379.83 1052.73,379.83 1051.55,379.82 1050.37,379.81 1049.19,379.80 1048.01,379.78 1046.83,379.76 1045.65,379.74 1044.47,379.71 1043.29,379.68 1042.11,379.65 1040.94,379.61 1039.76,379.57 1038.58,379.53 1037.40,379.48 1036.23,379.43 1035.05,379.38 1033.88,379.33 1032.70,379.27 1031.53,379.20 1030.36,379.14 1029.19,379.07 1028.02,379.00 1026.85,378.92 1025.68,378.84 1024.51,378.76 1023.34,378.68 1022.17,378.59 1021.01,378.50 1019.85,378.40 1018.68,378.31 1017.52,378.20 1016.36,378.10 1015.20,377.99 1014.04,377.88 1012.89,377.77 1011.73,377.65 1010.58,377.53 1009.43,377.41 1008.28,377.28 1007.13,377.15 1005.98,377.02 1004.84,376.89 1003.69,376.75 1002.55,376.60 1001.41,376.46 1000.27,376.31 999.14,376.16 998.00,376.01 996.87,375.85 995.74,375.69 994.61,375.52 993.48,375.36 992.36,375.19 991.23,375.01 990.11,374.84 989.00,374.66 987.88,374.48 986.77,374.29 985.65,374.10 984.54,373.91 983.44,373.72 982.33,373.52 981.23,373.32 980.13,373.12 979.04,372.91 977.94,372.70 976.85,372.49 975.76,372.28 974.67,372.06 973.59,371.84 972.51,371.62 971.43,371.39 970.35,371.16 969.28,370.93 968.21,370.69 967.14,370.45 966.08,370.21 965.02,369.97 963.96,369.72 962.91,369.47 961.85,369.22 960.81,368.97 959.76,368.71 958.72,368.45 957.68,368.19 956.64,367.92 955.61,367.65 954.58,367.38 953.55,367.11 952.53,366.83 951.51,366.55 950.50,366.27 949.48,365.98 948.47,365.69 947.47,365.40 946.47,365.11 945.47,364.82 944.47,364.52 943.48,364.22 942.50,363.91 941.51,363.61 940.53,363.30 939.56,362.99 938.58,362.68 937.61,362.36 936.65,362.04 935.69,361.72 934.73,361.40 933.78,361.07 932.83,360.74 931.89,360.41 930.94,360.08 930.01,359.74 929.07,359.40 928.15,359.06 927.22,358.72 926.30,358.37 925.38,358.03 924.47,357.68 923.56,357.33 922.66,356.97 921.76,356.61 920.86,356.25 919.97,355.89 919.09,355.53 918.21,355.16 917.33,354.80 916.45,354.43 915.59,354.05 914.72,353.68 913.86,353.30 913.01,352.92 912.15,352.54 911.31,352.16 910.47,351.77 909.63,351.39 908.80,351.00 907.97,350.61 907.15,350.21 906.33,349.82 905.51,349.42 904.70,349.02 903.90,348.62 903.10,348.21 902.30,347.81 901.51,347.40 900.73,346.99 899.95,346.58 899.17,346.17 898.40,345.75 897.64,345.34 896.88,344.92 896.12,344.50 895.37,344.08 894.62,343.65 893.88,343.23 893.15,342.80 892.41,342.37 891.69,341.94 890.97,341.51 890.25,341.07 889.54,340.63 888.84,340.20 888.13,339.76 887.44,339.32 890.79,383.68 891.47,384.13 892.16,384.58 892.85,385.03 893.54,385.48 894.25,385.92 894.95,386.36 895.67,386.81 896.38,387.25 897.10,387.69 897.83,388.12 898.56,388.56 899.30,388.99 900.04,389.42 900.79,389.85 901.54,390.28 902.29,390.70 903.05,391.13 903.82,391.55 904.59,391.97 905.36,392.39 906.14,392.80 906.93,393.22 907.71,393.63 908.51,394.04 909.30,394.44 910.11,394.85 910.91,395.25 911.72,395.65 912.54,396.05 913.36,396.45 914.19,396.85 915.01,397.24 915.85,397.63 916.69,398.02 917.53,398.40 918.38,398.79 919.23,399.17 920.08,399.55 920.94,399.93 921.81,400.30 922.67,400.68 923.55,401.05 924.42,401.41 925.31,401.78 926.19,402.14 927.08,402.50 927.97,402.86 928.87,403.22 929.77,403.57 930.68,403.92 931.59,404.27 932.50,404.62 933.42,404.96 934.34,405.31 935.26,405.64 936.19,405.98 937.13,406.32 938.06,406.65 939.00,406.98 939.95,407.30 940.90,407.63 941.85,407.95 942.81,408.27 943.76,408.58 944.73,408.90 945.69,409.21 946.66,409.51 947.64,409.82 948.61,410.12 949.60,410.42 950.58,410.72 951.57,411.02 952.56,411.31 953.55,411.60 954.55,411.88 955.55,412.17 956.55,412.45 957.56,412.73 958.57,413.00 959.59,413.27 960.60,413.54 961.62,413.81 962.65,414.07 963.67,414.33 964.70,414.59 965.73,414.85 966.77,415.10 967.81,415.35 968.85,415.60 969.89,415.84 970.94,416.08 971.99,416.32 973.04,416.55 974.10,416.79 975.15,417.02 976.21,417.24 977.28,417.46 978.34,417.68 979.41,417.90 980.48,418.12 981.55,418.33 982.63,418.53 983.71,418.74 984.79,418.94 985.87,419.14 986.96,419.34 988.04,419.53 989.13,419.72 990.22,419.90 991.32,420.09 992.41,420.27 993.51,420.44 994.61,420.62 995.71,420.79 996.82,420.96 997.92,421.12 999.03,421.28 1000.14,421.44 1001.25,421.60 1002.37,421.75 1003.48,421.90 1004.60,422.04 1005.72,422.18 1006.84,422.32 1007.96,422.46 1009.08,422.59 1010.21,422.72 1011.33,422.85 1012.46,422.97 1013.59,423.09 1014.72,423.21 1015.85,423.32 1016.99,423.43 1018.12,423.54 1019.26,423.64 1020.40,423.74 1021.53,423.84 1022.67,423.93 1023.81,424.02 1024.95,424.11 1026.10,424.19 1027.24,424.27 1028.38,424.35 1029.53,424.42 1030.67,424.49 1031.82,424.56 1032.97,424.62 1034.12,424.68 1035.27,424.74 1036.41,424.79 1037.56,424.84 1038.72,424.89 1039.87,424.94 1041.02,424.98 1042.17,425.01 1043.32,425.05 1044.48,425.08 1045.63,425.10 1046.78,425.13 1047.93,425.15 1049.09,425.17 1050.24,425.18 1051.40,425.19 1052.55,425.20 1053.70,425.20 1054.86,425.20 1056.01,425.20 1057.17,425.19 1058.32,425.18 1059.47,425.17 1060.63,425.15 1061.78,425.13 1062.93,425.11 1064.09,425.09 1065.24,425.06 1066.39,425.02 1067.54,424.99 1068.69,424.95 1069.84,424.90 1070.99,424.86 1072.14,424.81 1073.29,424.76 1074.44,424.70 1075.59,424.64 1076.73,424.58 1077.88,424.51 1079.02,424.44 1080.17,424.37 1081.31,424.29 1082.45,424.21 1083.59,424.13 1084.73,424.04 1085.87,423.95 1087.01,423.86 1088.14,423.77 1089.28,423.67 1090.41,423.56 1091.55,423.46 1092.68,423.35 1093.81,423.24 1094.94,423.12 1096.06,423.00 1097.19,422.88 1098.32,422.76 1099.44,422.63 1100.56,422.50 1101.68,422.36 1102.80,422.22 1103.91,422.08 1105.03,421.94 1106.14,421.79 1107.25,421.64 1108.36,421.49 1109.47,421.33 1110.57,421.17 1111.68,421.00 1112.78,420.84 1113.88,420.67 1114.97,420.49 1116.07,420.32 1117.16,420.14 1118.25,419.96 1119.34,419.77 1120.43,419.58 1121.51,419.39 1122.59,419.20 1123.67,419.00 1124.75,418.80 1125.83,418.59 1126.90,418.39 1127.97,418.18 1129.04,417.96 1130.10,417.75 1131.16,417.53 1132.22,417.31 1133.28,417.08 1134.33,416.85 1135.38,416.62 1136.43,416.39 1137.48,416.15 1138.52,415.91 1139.56,415.67 1140.60,415.42 1141.63,415.17 1142.66,414.92 1143.69,414.67 1144.72,414.41 1145.74,414.15 1146.76,413.88 1147.77,413.62 1148.78,413.35 1149.79,413.08 1150.80,412.80 1151.80,412.53 1152.80,412.25 1153.80,411.96 1154.79,411.68 1155.78,411.39 1156.77,411.10 1157.75,410.80 1158.73,410.51 1159.71,410.21 1160.68,409.91 1161.65,409.60 1162.61,409.29 1163.57,408.98 1164.53,408.67 1165.49,408.36 1166.44,408.04 1167.38,407.72 1168.33,407.39 1169.26,407.07 1170.20,406.74 1171.13,406.41 1172.06,406.08 1172.98,405.74 1173.90,405.40 1174.82,405.06 1175.73,404.72 1176.64,404.37 1177.54,404.02 1178.44,403.67 1179.34,403.32 1180.23,402.96 1181.12,402.61 1182.00,402.25 1182.88,401.88 1183.75,401.52 1184.63,401.15 1185.49,400.78 1186.35,400.41 1187.21,400.03 1188.07,399.66 1188.92,399.28 1189.76,398.90 1190.60,398.51 1191.44,398.13 1192.27,397.74 1193.10,397.35 1193.92,396.96 1194.74,396.56 1195.55,396.17 1196.36,395.77 1197.17,395.37 1197.97,394.96 1198.76,394.56 1199.55,394.15 1200.34,393.74 1201.12,393.33 1201.90,392.92 1202.67,392.50 1203.44,392.09 1204.20,391.67 1204.96,391.25 1205.71,390.82 1206.46,390.40 1207.20,389.97 1207.94,389.54 1208.68,389.11 1209.41,388.68 1210.13,388.25 1210.85,387.81 1211.56,387.37 1212.27,386.93 1212.98,386.49 1213.68,386.05 1214.37,385.60 1215.06,385.15 1215.75,384.71 1216.43,384.26 1217.10,383.80 1217.77,383.35 1218.44,382.89 1219.10,382.44 1219.75,381.98 1220.40,381.52 1221.05,381.06 1221.69,380.59 1222.32,380.13 1222.95,379.66 1223.57,379.20 1224.19,378.73 1224.81,378.26 1225.41,377.78 1226.02,377.31 1226.62,376.83 1227.21,376.36 1227.80,375.88 1228.38,375.40 1228.96,374.92 1229.53,374.44 1230.09,373.95 1230.65,373.47 1231.21,372.98 1231.76,372.50 1232.31,372.01 1232.85,371.52 1233.38,371.03 1233.91,370.53 1234.44,370.04 1234.95,369.55 1235.47,369.05 1235.98,368.55 1236.48,368.05 1236.98,367.56 1237.47,367.05 1237.95,366.55 1238.44,366.05 1238.91,365.55 1239.38,365.04 1239.85,364.54 1240.31,364.03 1240.76,363.52 1241.21,363.01 1241.65,362.50 1242.09,361.99 1242.52,361.48 1242.95,360.97 1243.37,360.46 1243.79,359.94 1244.20,359.43 1244.60,358.91 1245.00,358.40 1245.40,357.88 1245.79,357.36 1246.17,356.84 1246.55,356.32 1246.92,355.80 1247.29,355.28 1247.65,354.76 1248.01,354.24 1248.36,353.71 1248.70,353.19 1249.04,352.67 1249.38,352.14 1249.70,351.61 1250.03,351.09 1250.35,350.56 1250.66,350.03" fill="url(#og)" stroke="url(#og)" stroke-width="0.7" stroke-linejoin="round"/>
<polygon points="1053.45,263.72 1254.98,306.55 1253.32,309.14 1251.53,311.71 1249.59,314.26 1247.50,316.80 1245.28,319.31 1242.91,321.80 1240.40,324.27 1237.75,326.70 1234.97,329.11 1232.04,331.49 1228.98,333.83 1225.78,336.14 1222.45,338.40 1218.98,340.63 1215.39,342.82 1211.66,344.96 1207.81,347.05 1203.83,349.10 1199.74,351.09 1195.52,353.03 1191.18,354.92 1186.74,356.76 1182.18,358.53 1177.51,360.24 1172.74,361.90 1167.87,363.48 1162.91,365.01 1157.85,366.47 1152.70,367.85 1147.47,369.17 1142.15,370.42 1136.76,371.59 1131.30,372.69 1125.77,373.72 1120.17,374.67 1114.52,375.54 1108.81,376.33 1103.06,377.05 1097.26,377.68 1091.42,378.24 1085.55,378.71 1079.65,379.10 1073.73,379.41 1067.79,379.63 1061.84,379.77 1055.88,379.83 1049.92,379.81 1043.96,379.70 1038.02,379.51 1032.08,379.23 1026.16,378.88 1020.27,378.44 1014.41,377.92 1008.58,377.32 1002.80,376.64 997.05,375.87 991.36,375.03 985.72,374.12 980.15,373.12 974.63,372.05 969.19,370.91 963.81,369.69 958.52,368.40 953.31,367.04 948.18,365.61 943.15,364.11 938.20,362.55 933.36,360.92 928.62,359.24 923.98,357.49 919.45,355.68 915.03,353.81 910.72,351.89 906.53,349.92 902.47,347.89 898.52,345.82 894.70,343.69 891.00,341.53 887.44,339.32" fill="#E97B31" stroke="#E97B31" stroke-width="0.7" stroke-linejoin="round"/>
<rect x="1342" y="225.4" width="12" height="11" fill="#4472C4"/>
<text x="1359.42" y="237.00" textLength="43.72" lengthAdjust="spacingAndGlyphs" font-size="17" fill="#404040" stroke="#404040" stroke-width="0.3">West</text>
<rect x="1342" y="263.15" width="12" height="11" fill="#ED7D31"/>
<text x="1357.77" y="274.75" textLength="51.60" lengthAdjust="spacingAndGlyphs" font-size="17" fill="#404040" stroke="#404040" stroke-width="0.3">North</text>
<rect x="1342" y="300.9" width="12" height="11" fill="#A5A5A5"/>
<text x="1358.02" y="312.50" textLength="36.11" lengthAdjust="spacingAndGlyphs" font-size="17" fill="#404040" stroke="#404040" stroke-width="0.3">East</text>
<rect x="1342" y="338.65" width="12" height="11" fill="#FFC000"/>
<text x="1358.62" y="350.25" textLength="50.64" lengthAdjust="spacingAndGlyphs" font-size="17" fill="#404040" stroke="#404040" stroke-width="0.3">South</text>
</svg></body></html>
